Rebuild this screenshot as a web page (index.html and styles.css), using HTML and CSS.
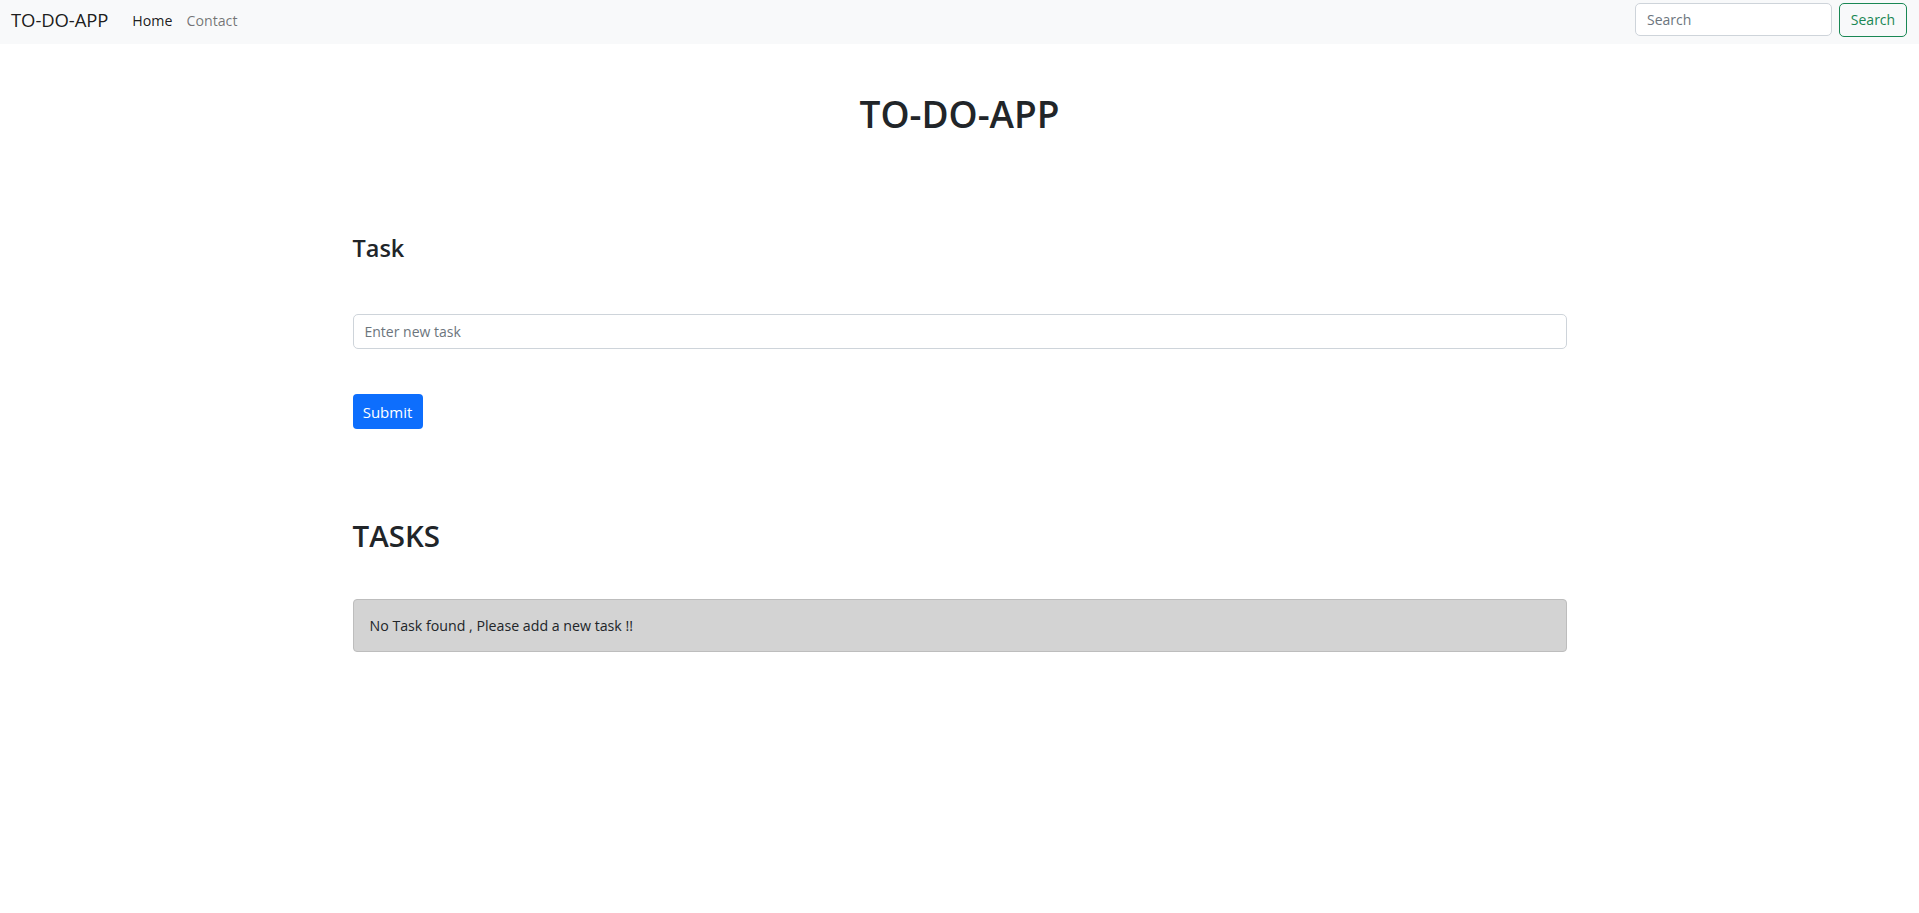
FILE: index.html
```html
<!DOCTYPE html>
<html lang="en">
<head>
<meta charset="utf-8">
<title>TO-DO-APP</title>
<link rel="stylesheet" href="styles.css">
</head>
<body>
<nav class="navbar">
  <div class="nav-left">
    <a class="brand" href="#">TO-DO-APP</a>
    <ul class="nav-links">
      <li><a class="nav-link active" href="#">Home</a></li>
      <li><a class="nav-link" href="#">Contact</a></li>
    </ul>
  </div>
  <form class="nav-search">
    <input class="search-input" type="search" placeholder="Search">
    <button class="search-btn" type="button">Search</button>
  </form>
</nav>
<main class="container">
  <h1 class="page-title">TO-DO-APP</h1>
  <form class="task-form">
    <h3 class="task-label">Task</h3>
    <input class="task-input" type="text" placeholder="Enter new task">
    <button class="submit-btn" type="button">Submit</button>
  </form>
  <h2 class="tasks-title">TASKS</h2>
  <div class="empty-alert">No Task found , Please add a new task !!</div>
</main>
</body>
</html>
```
FILE: styles.css
```css
* { box-sizing: border-box; }
html, body { margin: 0; padding: 0; }
body {
  font-family: "Open Sans", "Noto Sans", sans-serif;
  color: #212529;
  background: #fff;
  font-size: 16px;
}
a { text-decoration: none; }

.navbar {
  height: 44px;
  background: #f8f9fa;
  display: flex;
  align-items: center;
  justify-content: space-between;
  padding: 0 12px 5px 11px;
}
.nav-left { display: flex; align-items: center; }
.brand {
  font-size: 18.5px;
  color: rgba(0,0,0,.9);
  margin-right: 24px;
  letter-spacing: -0.1px;
}
.nav-links {
  list-style: none;
  margin: 0;
  padding: 0;
  display: flex;
  gap: 14px;
}
.nav-link {
  font-size: 14.2px;
  color: rgba(0,0,0,.55);
}
.nav-link.active { color: rgba(0,0,0,.9); }

.nav-search { display: flex; align-items: center; gap: 7px; }
.search-input {
  width: 197px;
  height: 33px;
  border: 1px solid #ced4da;
  border-radius: 5px;
  padding: 0 11px;
  font-family: inherit;
  font-size: 14px;
  color: #212529;
  background: #fff;
  outline: none;
}
.search-input::placeholder { color: #6c757d; }
.search-btn {
  width: 68px;
  height: 34px;
  border: 1px solid #198754;
  border-radius: 5px;
  background: transparent;
  color: #198754;
  font-family: inherit;
  font-size: 14px;
  padding: 0;
}

.container {
  width: 1214px;
  margin: 0 auto;
}
.page-title {
  margin: 46px 0 0;
  text-align: center;
  font-size: 37px;
  line-height: 48px;
  font-weight: 600;
}
.task-form {
  display: flex;
  flex-direction: column;
  align-items: flex-start;
}
.task-label {
  margin: 95px 0 0;
  font-size: 23.5px;
  line-height: 30px;
  font-weight: 600;
}
.task-input {
  margin-top: 51px;
  width: 100%;
  height: 35px;
  border: 1px solid #ced4da;
  border-radius: 5px;
  padding: 0 11px;
  font-family: inherit;
  font-size: 14px;
  color: #212529;
  outline: none;
}
.task-input::placeholder { color: #6c757d; }
.submit-btn {
  margin-top: 45px;
  width: 70px;
  height: 35px;
  border: none;
  border-radius: 4px;
  background: #0d6efd;
  color: #fff;
  font-family: inherit;
  font-size: 15px;
  padding: 0;
}
.tasks-title {
  margin: 89px 0 0;
  font-size: 29.5px;
  line-height: 36px;
  font-weight: 600;
}
.empty-alert {
  margin-top: 45px;
  height: 53px;
  display: flex;
  align-items: center;
  padding: 0 16px;
  background: #d3d3d3;
  border: 1px solid #bdbdbd;
  border-radius: 4px;
  font-size: 14.2px;
  color: #212529;
}
```
